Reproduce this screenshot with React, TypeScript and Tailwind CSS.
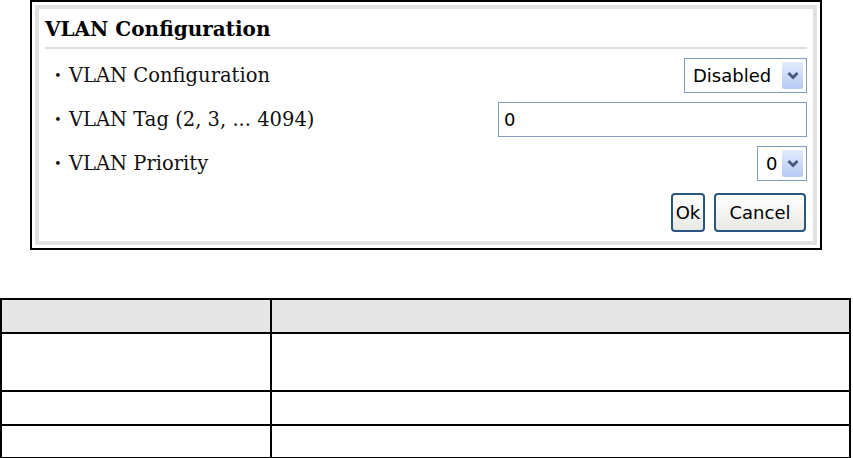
import React from "react";

const serif = { fontFamily: '"DejaVu Serif", "Liberation Serif", serif' };

const Chevron: React.FC = () => (
  <span className="flex h-full w-[21px] items-center justify-center rounded-[2px] bg-gradient-to-b from-[#e3ebfc] to-[#b5c9f4]">
    <svg width="12" height="9" viewBox="0 0 12 9">
      <path d="M1.5 2 L6 6.5 L10.5 2" fill="none" stroke="#45597f" strokeWidth="2.8" />
    </svg>
  </span>
);

const Select: React.FC<{ value: string; width: string }> = ({ value, width }) => (
  <div className={`flex h-[35px] ${width} items-center justify-between border border-[#7f9db9] bg-white py-[3px] pl-[8px] pr-[3px]`}>
    <span className="text-[18px] leading-none text-black">{value}</span>
    <Chevron />
  </div>
);

const Label: React.FC<{ text: string }> = ({ text }) => (
  <div className="flex items-center text-[19.5px] text-[#111]" style={serif}>
    <span className="w-[15px] text-[13px]">•</span>
    <span>{text}</span>
  </div>
);

export default function App() {
  return (
    <div className="h-[458px] w-[853px] bg-white" style={{ fontFamily: '"DejaVu Sans", Tahoma, sans-serif' }}>
      {/* Config panel */}
      <div className="ml-[30px] h-[250px] w-[792px] border-2 border-black p-[3px]">
        <div className="flex h-full flex-col border-4 border-[#e1e1e1] px-[6px]">
          <div className="flex h-[40px] items-end border-b-2 border-[#dddddd] pb-[8px]">
            <h1 className="text-[20px] font-bold leading-none text-black" style={serif}>VLAN Configuration</h1>
          </div>
          <div className="flex flex-col gap-[9px] pt-[9px] pl-[9px]">
            <div className="flex h-[35px] items-center justify-between">
              <Label text="VLAN Configuration" />
              <Select value="Disabled" width="w-[123px]" />
            </div>
            <div className="flex h-[35px] items-center justify-between">
              <Label text="VLAN Tag (2, 3, ... 4094)" />
              <div className="flex h-[35px] w-[309px] items-center border border-[#7f9db9] bg-white pl-[5px] text-[18px] text-black">0</div>
            </div>
            <div className="flex h-[35px] items-center justify-between">
              <Label text="VLAN Priority" />
              <Select value="0" width="w-[50px]" />
            </div>
            <div className="mt-[3px] flex justify-end gap-[9px] pr-[1px]">
              <button className="h-[39px] w-[34px] rounded-[4px] border-2 border-[#2c5680] bg-gradient-to-b from-white to-[#e8e8e4] text-[18px] text-black">Ok</button>
              <button className="h-[39px] w-[92px] rounded-[4px] border-2 border-[#2c5680] bg-gradient-to-b from-white to-[#e8e8e4] text-[18px] text-black">Cancel</button>
            </div>
          </div>
        </div>
      </div>

      {/* Table */}
      <table className="mt-[48px] w-[851px] border-collapse border-2 border-black">
        <tbody>
          <tr className="h-[34px] bg-[#e6e6e6]">
            <td className="w-[270px] border-2 border-black"></td>
            <td className="border-2 border-black"></td>
          </tr>
          <tr className="h-[58px]">
            <td className="border-2 border-black"></td>
            <td className="border-2 border-black"></td>
          </tr>
          <tr className="h-[34px]">
            <td className="border-2 border-black"></td>
            <td className="border-2 border-black"></td>
          </tr>
          <tr className="h-[33px]">
            <td className="border-2 border-black"></td>
            <td className="border-2 border-black"></td>
          </tr>
        </tbody>
      </table>
    </div>
  );
}
